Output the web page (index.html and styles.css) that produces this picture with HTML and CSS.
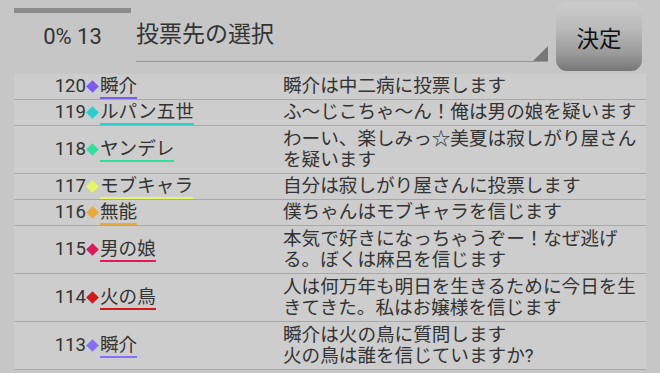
FILE: index.html
```html
<!DOCTYPE html>
<html lang="ja">
<head>
<meta charset="utf-8">
<link rel="stylesheet" href="styles.css">
</head>
<body>
<div class="topbar">
  <div class="status">
    <div class="progress"></div>
    <div class="count">0% 13</div>
  </div>
  <div class="spinner">
    <span class="spinner-text">投票先の選択</span>
    <span class="spinner-corner"></span>
  </div>
  <button class="decide">決定</button>
</div>
<div class="table">
  <div class="row">
    <div class="num">120</div><div class="dia"><i class="c-purple"></i></div>
    <div class="name"><span class="u-purple">瞬介</span></div>
    <div class="desc">瞬介は中二病に投票します</div>
  </div>
  <div class="row">
    <div class="num">119</div><div class="dia"><i class="c-teal"></i></div>
    <div class="name"><span class="u-teal">ルパン五世</span></div>
    <div class="desc">ふ～じこちゃ～ん！俺は男の娘を疑います</div>
  </div>
  <div class="row tall">
    <div class="num">118</div><div class="dia"><i class="c-mint"></i></div>
    <div class="name"><span class="u-mint">ヤンデレ</span></div>
    <div class="desc">わーい、楽しみっ☆美夏は寂しがり屋さんを疑います</div>
  </div>
  <div class="row">
    <div class="num">117</div><div class="dia"><i class="c-lime"></i></div>
    <div class="name"><span class="u-lime">モブキャラ</span></div>
    <div class="desc">自分は寂しがり屋さんに投票します</div>
  </div>
  <div class="row">
    <div class="num">116</div><div class="dia"><i class="c-orange"></i></div>
    <div class="name"><span class="u-orange">無能</span></div>
    <div class="desc">僕ちゃんはモブキャラを信じます</div>
  </div>
  <div class="row tall">
    <div class="num">115</div><div class="dia"><i class="c-crimson"></i></div>
    <div class="name"><span class="u-crimson">男の娘</span></div>
    <div class="desc">本気で好きになっちゃうぞー！なぜ逃げる。ぼくは麻呂を信じます</div>
  </div>
  <div class="row tall">
    <div class="num">114</div><div class="dia"><i class="c-red"></i></div>
    <div class="name"><span class="u-red">火の鳥</span></div>
    <div class="desc">人は何万年も明日を生きるために今日を生きてきた。私はお嬢様を信じます</div>
  </div>
  <div class="row tall">
    <div class="num">113</div><div class="dia"><i class="c-violet"></i></div>
    <div class="name"><span class="u-violet">瞬介</span></div>
    <div class="desc">瞬介は火の鳥に質問します<br>火の鳥は誰を信じていますか?</div>
  </div>
</div>
</body>
</html>
```

FILE: styles.css
```css
html, body {
  margin: 0;
  padding: 0;
}
body {
  width: 660px;
  height: 373px;
  overflow: hidden;
  background: #c6c6c6;
  font-family: Roboto, "Noto Sans CJK JP", sans-serif;
  color: #333;
}
.topbar {
  display: flex;
  align-items: flex-start;
  height: 74px;
}
.status {
  width: 117px;
  margin-left: 14px;
  display: flex;
  flex-direction: column;
  align-items: center;
}
.progress {
  width: 100%;
  height: 5px;
  margin-top: 8px;
  background: #8c8c8c;
}
.count {
  margin-top: 11px;
  font-size: 22px;
  line-height: 26px;
  color: #333;
}
.spinner {
  position: relative;
  width: 412px;
  margin-left: 5px;
  height: 62px;
  box-sizing: border-box;
  padding-top: 3px;
  border-bottom: 1px solid #959595;
  display: flex;
  align-items: center;
}
.spinner-text {
  font-family: "Noto Sans CJK JP", sans-serif;
  font-size: 23px;
  line-height: 30px;
  color: #333;
}
.spinner-corner {
  position: absolute;
  right: 0;
  bottom: 0;
  width: 15px;
  height: 15px;
  background: #777;
  clip-path: polygon(100% 0, 100% 100%, 0 100%);
}
.decide {
  margin-left: 8px;
  margin-top: 2px;
  width: 86px;
  height: 69px;
  border: none;
  border-radius: 11px;
  padding: 0;
  background: linear-gradient(to bottom, #cdcdcd 0%, #b9b9b9 40%, #9a9a9a 75%, #767676 100%);
  font-family: "Noto Sans CJK JP", sans-serif;
  font-size: 22.5px;
  font-weight: 400;
  color: #111;
}
.table {
  margin-left: 14px;
  width: 632px;
  background: #cdcdcd;
}
.row {
  display: flex;
  align-items: center;
  border-bottom: 1px solid #a8a8a8;
  font-size: 18.6px;
}
.num {
  width: 72px;
  text-align: right;
  line-height: 21px;
}
.dia {
  width: 13px;
  height: 21px;
  display: flex;
  align-items: center;
  justify-content: center;
}
.dia i {
  display: block;
  width: 9px;
  height: 9px;
  transform: rotate(45deg);
}
.name {
  width: 183px;
  margin-left: 1px;
  display: flex;
  padding-top: 2px;
}
.name span {
  display: inline-block;
  line-height: 21px;
  border-bottom-width: 2px;
  border-bottom-style: solid;
}
.desc {
  flex: 1;
  line-height: 21px;
  padding: 2px 6px 2px 0;
}
.tall .desc {
  padding: 2.5px 6px 2.5px 0;
}
.c-purple { background: #7b5cf0; }
.c-teal { background: #2ccdcd; }
.c-mint { background: #30e09e; }
.c-lime { background: #e6f766; }
.c-orange { background: #e6aa3a; }
.c-crimson { background: #de1a5a; }
.c-red { background: #d01a1a; }
.c-violet { background: #8270fa; }
.name .u-purple { border-color: #7b5cf0; }
.name .u-teal { border-color: #2ccdcd; }
.name .u-mint { border-color: #30e09e; }
.name .u-lime { border-color: #e6f766; }
.name .u-orange { border-color: #e6aa3a; }
.name .u-crimson { border-color: #de1a5a; }
.name .u-red { border-color: #d01a1a; }
.name .u-violet { border-color: #8270fa; }
```
